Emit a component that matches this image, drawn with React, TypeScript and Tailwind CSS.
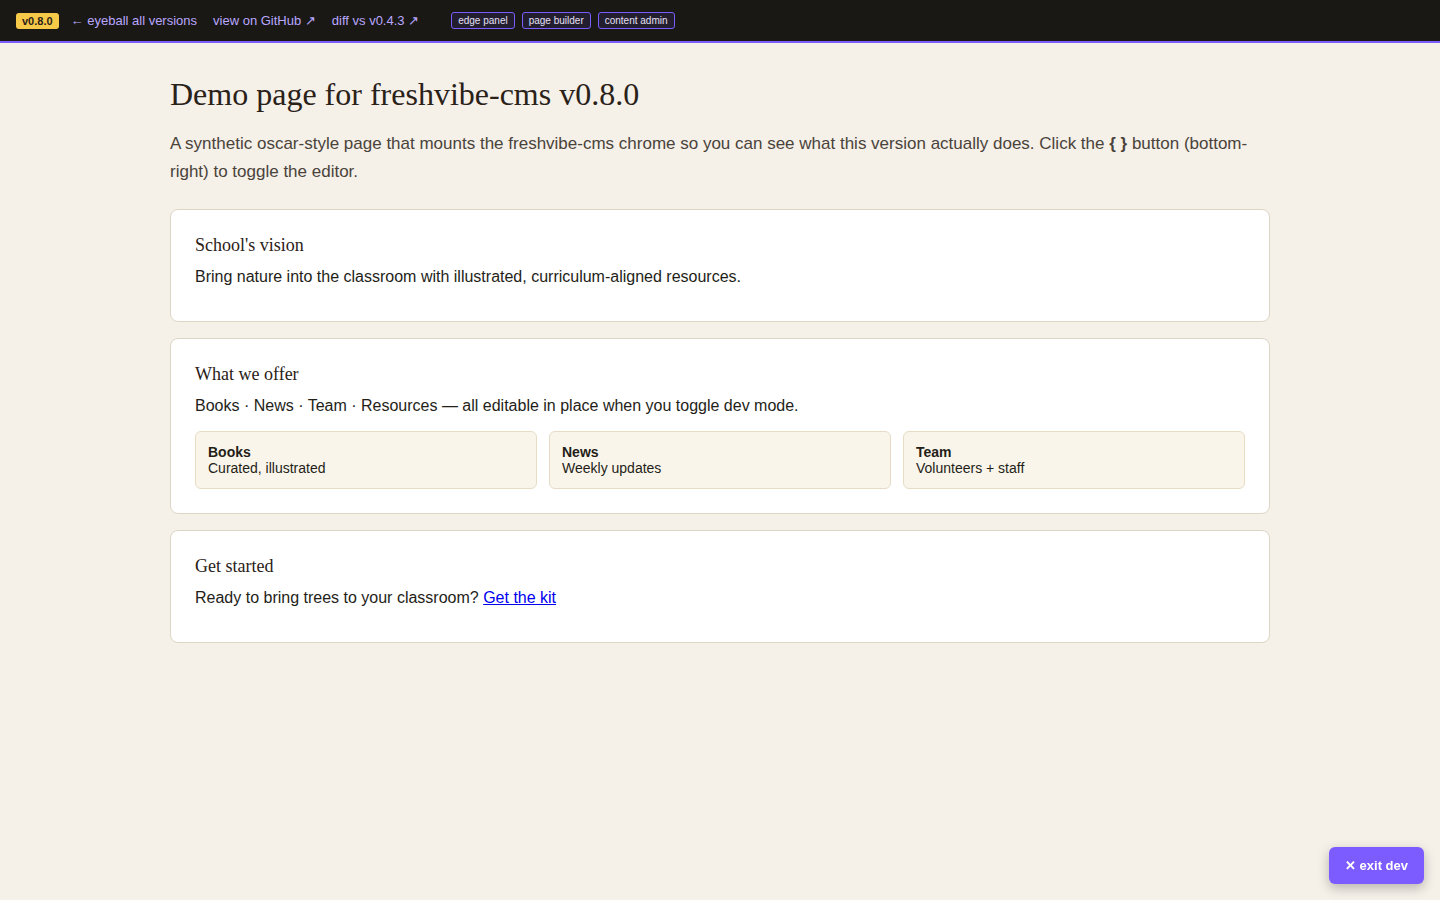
import React from 'react';

const tags = ['edge panel', 'page builder', 'content admin'];

const offers = [
  { title: 'Books', note: 'Curated, illustrated' },
  { title: 'News', note: 'Weekly updates' },
  { title: 'Team', note: 'Volunteers + staff' },
];

function Card({ title, children }: { title: string; children: React.ReactNode }) {
  return (
    <section className="bg-white border border-[#ddd6c6] rounded-lg px-6 pt-6 pb-6">
      <h2 className="font-['Liberation_Serif',serif] text-[18px] leading-[22px] text-[#2a2118] mb-[9px]">{title}</h2>
      {children}
    </section>
  );
}

export default function App() {
  return (
    <div className="min-h-screen bg-[#f5f0e8] font-['Liberation_Sans',Arial,sans-serif]">
      <header className="h-[43px] bg-[#1a1814] border-b-2 border-[#7c5cff] flex items-center px-4 text-[13px]">
        <span className="bg-[#f7c948] text-[#2a2118] text-[11px] font-bold rounded-[3px] px-[6px] leading-[16px]">v0.8.0</span>
        <a className="ml-3 text-[#b8a7ff]">← eyeball all versions</a>
        <a className="ml-4 text-[#b8a7ff]">view on GitHub ↗</a>
        <a className="ml-4 text-[#b8a7ff]">diff vs v0.4.3 ↗</a>
        <div className="ml-8 flex gap-[7px]">
          {tags.map((t) => (
            <span key={t} className="border border-[#7c5cff] bg-[#221e30] text-[#e6e0f7] text-[10px] leading-[15px] rounded-[3px] px-[6px]">
              {t}
            </span>
          ))}
        </div>
      </header>

      <main className="max-w-[1100px] mx-auto pt-[31px] pb-16">
        <h1 className="font-['Liberation_Serif',serif] text-[32px] leading-[40px] text-[#2a2118]">Demo page for freshvibe-cms v0.8.0</h1>
        <p className="mt-4 text-[17px] leading-[28px] text-[#4a433b]">
          A synthetic oscar-style page that mounts the freshvibe-cms chrome so you can see what this version actually does. Click the <b>{'{ }'}</b> button (bottom-right) to toggle the editor.
        </p>

        <div className="mt-[23px] flex flex-col gap-4">
          <Card title="School's vision">
            <p className="text-base leading-6 text-[#241e18] mb-2">Bring nature into the classroom with illustrated, curriculum-aligned resources.</p>
          </Card>

          <Card title="What we offer">
            <p className="text-base leading-6 text-[#241e18] mb-[13px]">Books · News · Team · Resources — all editable in place when you toggle dev mode.</p>
            <div className="grid grid-cols-3 gap-3">
              {offers.map((o) => (
                <div key={o.title} className="bg-[#faf5ea] border border-[#e6dcc4] rounded-md px-3 py-3 text-sm leading-4 text-[#241e18]">
                  <div className="font-bold">{o.title}</div>
                  <div>{o.note}</div>
                </div>
              ))}
            </div>
          </Card>

          <Card title="Get started">
            <p className="text-base leading-6 text-[#241e18] mb-2">
              Ready to bring trees to your classroom? <a href="#" className="text-[#0000ee] underline">Get the kit</a>
            </p>
          </Card>
        </div>
      </main>

      <button className="fixed bottom-4 right-4 bg-[#7c5cff] text-white text-[13px] font-bold rounded-md px-4 py-[9px] shadow-[0_4px_12px_rgba(0,0,0,0.25)]">
        ✕ exit dev
      </button>
    </div>
  );
}
